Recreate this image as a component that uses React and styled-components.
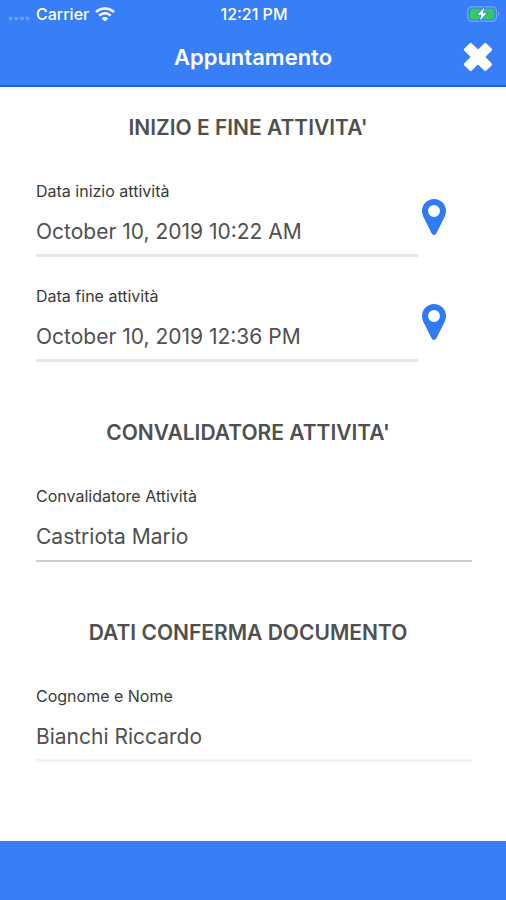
import React, { useState } from 'react';
import styled, { createGlobalStyle } from 'styled-components';

const palette = {
	primary: '#387ef7',
	primaryDark: '#2062e6',
	pin: '#2f7bf5',
	heading: '#505050',
	label: '#3a3a3a',
	value: '#505050',
};

const GlobalStyle = createGlobalStyle`
	* {
		box-sizing: border-box;
	}
	body {
		margin: 0;
		background: #ffffff;
		font-family: Inter, 'Liberation Sans', sans-serif;
	}
`;

const AppBlock = styled.div`
	display: flex;
	flex-direction: column;
	min-height: 100vh;
`;

const TopArea = styled.header`
	background: ${palette.primary};
	border-bottom: 2px solid ${palette.primaryDark};
	color: #ffffff;
`;

/* Carrier, clock and battery */
const StatusBar = styled.div`
	display: grid;
	grid-template-columns: 1fr auto 1fr;
	align-items: center;
	height: 28px;
	padding: 0 6px 0 8px;
	font-size: 16px;
	font-weight: 500;
`;

const StatusLeft = styled.div`
	display: flex;
	align-items: center;
	gap: 6px;
`;

const StatusRight = styled.div`
	display: flex;
	justify-content: flex-end;
`;

const TitleBar = styled.div`
	display: grid;
	grid-template-columns: 40px 1fr 40px;
	align-items: center;
	height: 57px;
	padding: 0 8px;
`;

const PageTitle = styled.h1`
	grid-column: 2;
	margin: 0;
	font-size: 22px;
	font-weight: 600;
	text-align: center;
`;

const IconButton = styled.button`
	display: flex;
	justify-content: center;
	align-items: center;
	padding: 0;
	border: none;
	background: none;
	color: inherit;
	cursor: pointer;
`;

const Content = styled.main`
	display: flex;
	flex: 1;
	flex-direction: column;
	gap: 57px;
	padding: 27px 34px 40px 36px;
`;

const SectionTitle = styled.h2`
	margin: 0 0 39px;
	padding-right: 12px;
	color: ${palette.heading};
	font-size: 21px;
	font-weight: 600;
	line-height: 28px;
	text-align: center;
`;

const FieldList = styled.div`
	display: flex;
	flex-direction: column;
	gap: 29px;
`;

const FieldRow = styled.div`
	display: flex;
	align-items: center;
`;

const FieldBlock = styled.div`
	display: flex;
	flex: 1;
	flex-direction: column;
	gap: 8px;
	min-width: 0;
`;

const Label = styled.label`
	color: ${palette.label};
	font-size: 16px;
	line-height: 20px;
`;

const TextInput = styled.input`
	width: 100%;
	height: 48px;
	padding: 0 0 1px;
	border: none;
	border-bottom: ${({ $line }) => $line};
	outline: none;
	background: none;
	color: ${palette.value};
	font-family: inherit;
	font-size: 21px;
	font-weight: 400;
`;

const PinButton = styled(IconButton)`
	width: 32px;
	margin-right: 22px;
	padding-bottom: 4px;
	color: ${palette.pin};
`;

const BottomBar = styled.footer`
	height: 59px;
	background: ${palette.primary};
`;

const SignalIcon = () => (
	<svg width="22" height="14" viewBox="0 0 22 14" fill="#fff" opacity="0.25" aria-hidden="true">
		<circle cx="2.5" cy="11.5" r="2" />
		<circle cx="8.2" cy="11.5" r="2" />
		<circle cx="13.9" cy="11.5" r="2" />
		<circle cx="19.6" cy="11.5" r="2" />
	</svg>
);

const WifiIcon = () => (
	<svg width="20" height="16" viewBox="0 0 20 16" fill="none" stroke="#fff" strokeWidth="2.5" aria-hidden="true">
		<path d="M1 6.2a12.8 12.8 0 0 1 18 0" />
		<path d="M4.3 9.6a8.1 8.1 0 0 1 11.4 0" />
		<path d="M10 15.6l-3.2-3.2a4.5 4.5 0 0 1 6.4 0z" fill="#fff" stroke="none" />
	</svg>
);

const BatteryIcon = () => (
	<svg width="33" height="16" viewBox="0 0 33 16" aria-hidden="true">
		<rect x="0.8" y="0.8" width="28.6" height="14.4" rx="4" fill="none" stroke="#78a8fa" strokeWidth="1.2" />
		<path d="M31 5.5c1.8.8 1.8 4.2 0 5z" fill="#78a8fa" />
		<rect x="3" y="2.7" width="24.2" height="10.6" rx="1.5" fill="#35cb58" />
		<path
			d="M17.4 1.6L10.6 8.7h3.8l-1.5 5.7 6.8-7.1h-3.8z"
			fill="#fff"
			stroke={palette.primary}
			strokeWidth="1.6"
			paintOrder="stroke"
		/>
	</svg>
);

const CloseIcon = () => (
	<svg width="30" height="30" viewBox="0 0 30 30" aria-hidden="true">
		<path
			d="M6.6 1.4L1.4 6.6q-1.1 1.1 0 2.2L7.6 15l-6.2 6.2q-1.1 1.1 0 2.2l5.2 5.2q1.1 1.1 2.2 0L15 22.4l6.2 6.2q1.1 1.1 2.2 0l5.2-5.2q1.1-1.1 0-2.2L22.4 15l6.2-6.2q1.1-1.1 0-2.2l-5.2-5.2q-1.1-1.1-2.2 0L15 7.6 8.8 1.4q-1.1-1.1-2.2 0z"
			fill="#fff"
		/>
	</svg>
);

const PinIcon = () => (
	<svg width="24" height="36" viewBox="0 0 24 36" aria-hidden="true">
		<path
			d="M12 0a12 12 0 0 0-12 12c0 2 .4 3.8 1.2 5.4l8.5 17.1a2.6 2.6 0 0 0 4.6 0l8.5-17.1A12 12 0 0 0 24 12 12 12 0 0 0 12 0zM12 6a6 6 0 1 1 0 12 6 6 0 0 1 0-12z"
			fill="currentColor"
			fillRule="evenodd"
		/>
	</svg>
);

const sections = [
	{
		title: "INIZIO E FINE ATTIVITA'",
		fields: [
			{ name: 'start', label: 'Data inizio attività', line: '3px solid #e6e6e6', pin: true },
			{ name: 'end', label: 'Data fine attività', line: '3px solid #e6e6e6', pin: true },
		],
	},
	{
		title: "CONVALIDATORE ATTIVITA'",
		fields: [{ name: 'validator', label: 'Convalidatore Attività', line: '2px solid #cccccc' }],
	},
	{
		title: 'DATI CONFERMA DOCUMENTO',
		fields: [{ name: 'fullName', label: 'Cognome e Nome', line: '3px solid #f3f3f3' }],
	},
];

const Field = ({ name, label, line, pin, value, onChange }) => (
	<FieldRow>
		<FieldBlock>
			<Label htmlFor={name}>{label}</Label>
			<TextInput id={name} name={name} value={value} onChange={onChange} $line={line} />
		</FieldBlock>
		{pin && (
			<PinButton type="button" aria-label={label}>
				<PinIcon />
			</PinButton>
		)}
	</FieldRow>
);

const App = () => {
	const [form, setForm] = useState({
		start: 'October 10, 2019 10:22 AM',
		end: 'October 10, 2019 12:36 PM',
		validator: 'Castriota Mario',
		fullName: 'Bianchi Riccardo',
	});

	const onChange = e => {
		const { name, value } = e.target;
		setForm({ ...form, [name]: value });
	};

	return (
		<AppBlock>
			<GlobalStyle />
			<TopArea>
				<StatusBar>
					<StatusLeft>
						<SignalIcon />
						<span>Carrier</span>
						<WifiIcon />
					</StatusLeft>
					<span>12:21 PM</span>
					<StatusRight>
						<BatteryIcon />
					</StatusRight>
				</StatusBar>
				<TitleBar>
					<PageTitle>Appuntamento</PageTitle>
					<IconButton type="button" aria-label="Chiudi">
						<CloseIcon />
					</IconButton>
				</TitleBar>
			</TopArea>
			<Content>
				{sections.map(section => (
					<section key={section.title}>
						<SectionTitle>{section.title}</SectionTitle>
						<FieldList>
							{section.fields.map(field => (
								<Field key={field.name} {...field} value={form[field.name]} onChange={onChange} />
							))}
						</FieldList>
					</section>
				))}
			</Content>
			<BottomBar />
		</AppBlock>
	);
};

export default App;
